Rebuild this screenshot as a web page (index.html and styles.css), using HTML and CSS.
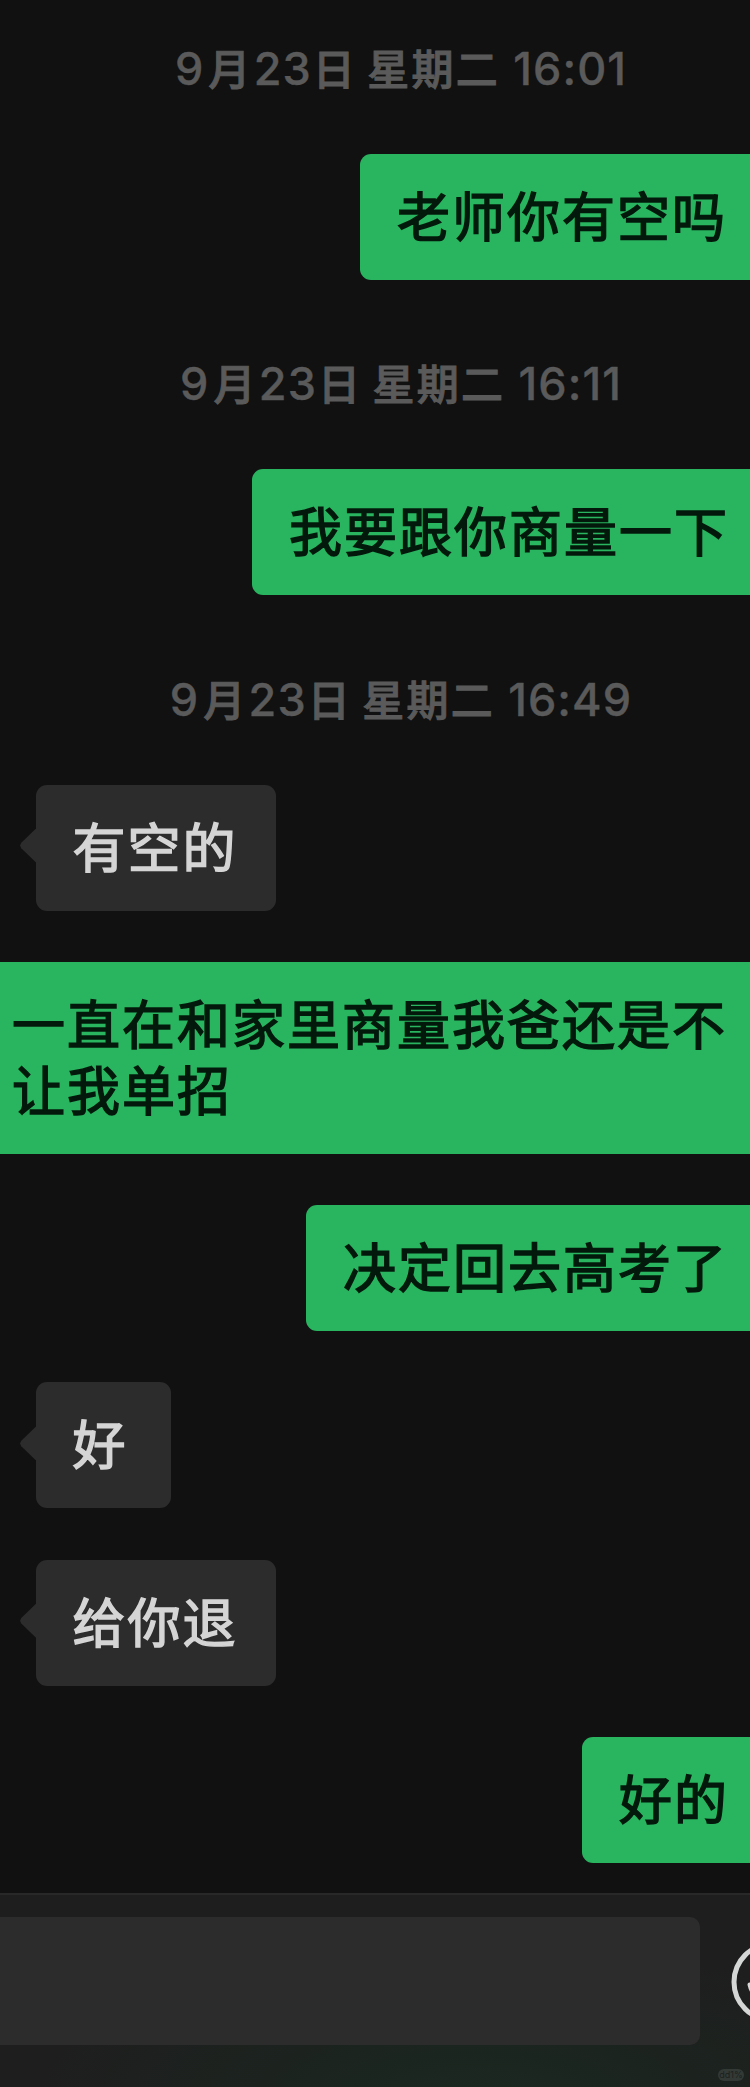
FILE: index.html
```html
<!doctype html>
<html lang="zh-CN">
	<head>
		<title>聊天</title>

		<meta charset="utf-8" />
		<meta name="viewport" content="width=device-width, initial-scale=1" />
		<link rel="stylesheet" href="styles.css">
	</head>

	<body>

		<div id="chat">

			<p class="time first">9<span class="unit">月</span>23<span class="unit day">日</span> <span>星期二</span> 16:01</p>
			<div class="row sent"><div class="bubble green six">老师你有空吗</div></div>

			<p class="time">9<span class="unit">月</span>23<span class="unit day">日</span> <span>星期二</span> 16:11</p>
			<div class="row sent"><div class="bubble green eight">我要跟你商量一下</div></div>

			<p class="time">9<span class="unit">月</span>23<span class="unit day">日</span> <span>星期二</span> 16:49</p>
			<div class="row"><div class="bubble grey">有空的</div></div>

			<div class="row sent"><div class="bubble green long">一直在和家里商量我爸还是不<br/>让我单招</div></div>
			<div class="row sent"><div class="bubble green seven">决定回去高考了</div></div>

			<div class="row"><div class="bubble grey single">好</div></div>
			<div class="row"><div class="bubble grey">给你退</div></div>

			<div class="row sent"><div class="bubble green two">好的</div></div>

		</div>

		<div id="input_bar">
			<div id="input_box"></div>
			<svg id="emoji" width="19" height="84" viewBox="0 0 19 84">
				<circle cx="41" cy="42" r="38" fill="none" stroke="#d5d7d6" stroke-width="5"/>
				<path d="M18.500 44.500 A 23 23 0 0 0 63.500 44.500 Z" fill="none" stroke="#d5d7d6" stroke-width="4" stroke-linejoin="round"/>
			</svg>
			<div id="badge">dd1%</div>
		</div>

	</body>

</html>
```

FILE: styles.css
```css
body {
	background-color: #111111;
	margin: 0;
	height: 2087px;
	overflow: hidden;
	display: flex;
	flex-direction: column;
	font-family: Inter, 'Noto Sans CJK SC', sans-serif;
}

#chat {
	height: 1893px;
	flex: none;
}

.time {
	margin: 0 0 53px 52px;
	padding-top: 21px;
	height: 64px;
	line-height: 64px;
	text-align: center;
	font-size: 45px;
	font-weight: 500;
	letter-spacing: 1.1px;
	color: #5a5a5a;
	white-space: pre;
	-webkit-text-stroke: 0.4px;
}

.time.first {
	padding-top: 37px;
}

.time span {
	font-size: 42px;
	letter-spacing: 2.3px;
	-webkit-text-stroke: 1px;
}

.time .unit {
	margin: 0 1px 0 4px;
}

.time .day {
	margin: 0 -3px 0 1px;
}

.row {
	display: flex;
	margin-bottom: 51.3px;
}

.sent {
	justify-content: flex-end;
}

.bubble {
	position: relative;
	box-sizing: border-box;
	padding: 27px 0 33px 37px;
	border-radius: 11px;
	font-family: 'Noto Sans CJK SC', sans-serif;
	font-size: 53px;
	letter-spacing: 2px;
	line-height: 66px;
	white-space: nowrap;
	-webkit-text-stroke: 1.5px;
}

.green {
	background-color: #29b560;
	color: #03190b;
	border-radius: 11px 0 0 11px;
}

.grey {
	background-color: #2c2c2c;
	color: #d5d5d5;
	width: 240.5px;
	margin-left: 35.5px;
}

/* little arrow on the left side */
.grey::before {
	content: '';
	position: absolute;
	left: -15.5px;
	top: 44px;
	width: 16px;
	height: 34px;
	background-color: #2c2c2c;
	clip-path: polygon(100% 0, 8% 42%, 0 50%, 8% 58%, 100% 100%);
}

.single {
	width: 135.5px;
}

.two {
	width: 168px;
}

.six {
	width: 390px;
}

.seven {
	width: 444px;
}

.eight {
	width: 498px;
}

.long {
	width: 750px;
	padding-left: 12px;
	border-radius: 0;
}

#input_bar {
	position: relative;
	box-sizing: border-box;
	height: 194px;
	display: flex;
	border-top: 2px solid #282828;
	padding-top: 22px;
	background: radial-gradient(ellipse 440px 150px at 480px 200px, #1a2820, #1e1e1e);
}

#input_box {
	width: 699.5px;
	height: 128px;
	border-radius: 0 10px 10px 0;
	background-color: #2c2c2c;
}

#emoji {
	margin: 23px 0 0 31.5px;
}

#badge {
	position: absolute;
	right: 6px;
	bottom: 6px;
	width: 26px;
	height: 12px;
	border-radius: 6px;
	background-color: #333a36;
	color: #1b211e;
	font-size: 9px;
	line-height: 12px;
	text-align: center;
}
```
